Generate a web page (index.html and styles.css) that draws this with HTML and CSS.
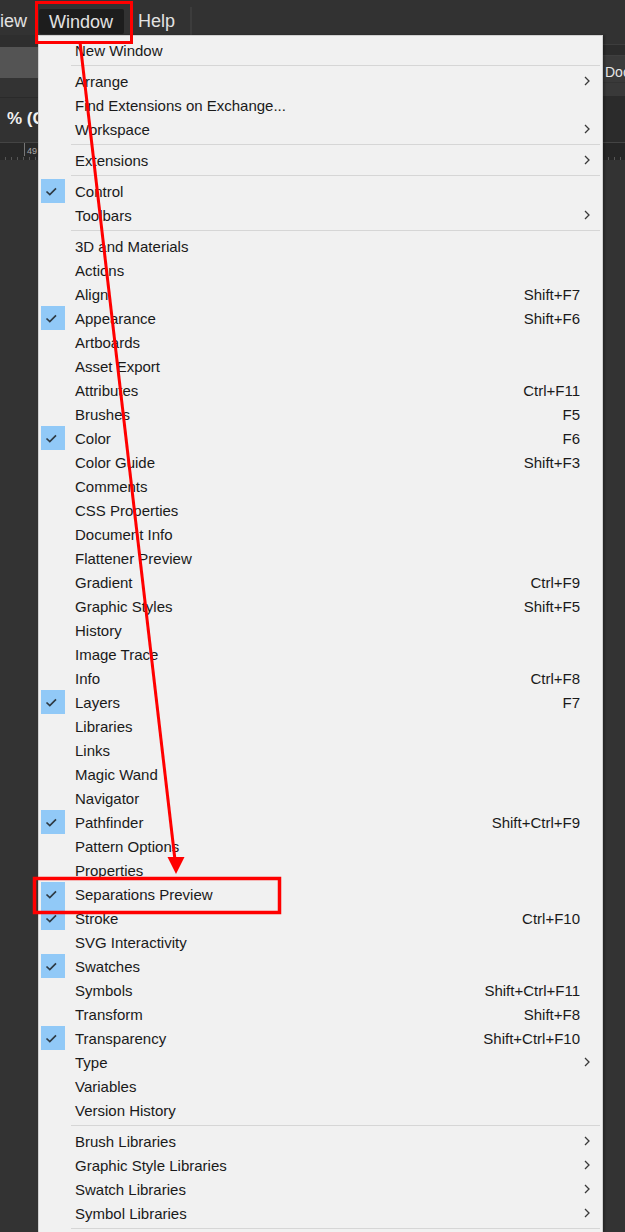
FILE: index.html
```html
<!DOCTYPE html>
<html>
<head>
<meta charset="utf-8">
<link rel="stylesheet" href="styles.css">
</head>
<body>
<div class="page">
  <div class="menubar">
    <span class="mb-item mb-view">iew</span>
    <span class="mb-item mb-active">Window</span>
    <span class="mb-item mb-help">Help</span>
    <span class="mb-sep"></span>
  </div>
  <div class="work">
    <div class="side-left">
      <div class="bl-a"></div>
      <div class="bl-ctrl"></div>
      <div class="bl-b"></div>
      <div class="bl-title"><span class="zoomtxt">% (C</span></div>
      <div class="ruler"><span class="tick"></span><span class="rnum">49</span></div>
      <div class="bl-rest"></div>
    </div>
    <div class="dropdown">
      <div class="item"><span class="chk"></span><span class="lbl">New Window</span><span class="key"></span><span class="sub"></span></div>
      <div class="sep"></div>
      <div class="item"><span class="chk"></span><span class="lbl">Arrange</span><span class="key"></span><span class="sub"><svg width="7" height="10" viewBox="0 0 7 10"><path d="M1 1 L5 5 L1 9" /></svg></span></div>
      <div class="item"><span class="chk"></span><span class="lbl">Find Extensions on Exchange...</span><span class="key"></span><span class="sub"></span></div>
      <div class="item"><span class="chk"></span><span class="lbl">Workspace</span><span class="key"></span><span class="sub"><svg width="7" height="10" viewBox="0 0 7 10"><path d="M1 1 L5 5 L1 9" /></svg></span></div>
      <div class="sep"></div>
      <div class="item"><span class="chk"></span><span class="lbl">Extensions</span><span class="key"></span><span class="sub"><svg width="7" height="10" viewBox="0 0 7 10"><path d="M1 1 L5 5 L1 9" /></svg></span></div>
      <div class="sep"></div>
      <div class="item on"><span class="chk"><svg width="24" height="24" viewBox="0 0 24 24"><path d="M5.5 12.5 L8.8 15.6 L15 9.4" /></svg></span><span class="lbl">Control</span><span class="key"></span><span class="sub"></span></div>
      <div class="item"><span class="chk"></span><span class="lbl">Toolbars</span><span class="key"></span><span class="sub"><svg width="7" height="10" viewBox="0 0 7 10"><path d="M1 1 L5 5 L1 9" /></svg></span></div>
      <div class="sep"></div>
      <div class="item"><span class="chk"></span><span class="lbl">3D and Materials</span><span class="key"></span><span class="sub"></span></div>
      <div class="item"><span class="chk"></span><span class="lbl">Actions</span><span class="key"></span><span class="sub"></span></div>
      <div class="item"><span class="chk"></span><span class="lbl">Align</span><span class="key">Shift+F7</span><span class="sub"></span></div>
      <div class="item on"><span class="chk"><svg width="24" height="24" viewBox="0 0 24 24"><path d="M5.5 12.5 L8.8 15.6 L15 9.4" /></svg></span><span class="lbl">Appearance</span><span class="key">Shift+F6</span><span class="sub"></span></div>
      <div class="item"><span class="chk"></span><span class="lbl">Artboards</span><span class="key"></span><span class="sub"></span></div>
      <div class="item"><span class="chk"></span><span class="lbl">Asset Export</span><span class="key"></span><span class="sub"></span></div>
      <div class="item"><span class="chk"></span><span class="lbl">Attributes</span><span class="key">Ctrl+F11</span><span class="sub"></span></div>
      <div class="item"><span class="chk"></span><span class="lbl">Brushes</span><span class="key">F5</span><span class="sub"></span></div>
      <div class="item on"><span class="chk"><svg width="24" height="24" viewBox="0 0 24 24"><path d="M5.5 12.5 L8.8 15.6 L15 9.4" /></svg></span><span class="lbl">Color</span><span class="key">F6</span><span class="sub"></span></div>
      <div class="item"><span class="chk"></span><span class="lbl">Color Guide</span><span class="key">Shift+F3</span><span class="sub"></span></div>
      <div class="item"><span class="chk"></span><span class="lbl">Comments</span><span class="key"></span><span class="sub"></span></div>
      <div class="item"><span class="chk"></span><span class="lbl">CSS Properties</span><span class="key"></span><span class="sub"></span></div>
      <div class="item"><span class="chk"></span><span class="lbl">Document Info</span><span class="key"></span><span class="sub"></span></div>
      <div class="item"><span class="chk"></span><span class="lbl">Flattener Preview</span><span class="key"></span><span class="sub"></span></div>
      <div class="item"><span class="chk"></span><span class="lbl">Gradient</span><span class="key">Ctrl+F9</span><span class="sub"></span></div>
      <div class="item"><span class="chk"></span><span class="lbl">Graphic Styles</span><span class="key">Shift+F5</span><span class="sub"></span></div>
      <div class="item"><span class="chk"></span><span class="lbl">History</span><span class="key"></span><span class="sub"></span></div>
      <div class="item"><span class="chk"></span><span class="lbl">Image Trace</span><span class="key"></span><span class="sub"></span></div>
      <div class="item"><span class="chk"></span><span class="lbl">Info</span><span class="key">Ctrl+F8</span><span class="sub"></span></div>
      <div class="item on"><span class="chk"><svg width="24" height="24" viewBox="0 0 24 24"><path d="M5.5 12.5 L8.8 15.6 L15 9.4" /></svg></span><span class="lbl">Layers</span><span class="key">F7</span><span class="sub"></span></div>
      <div class="item"><span class="chk"></span><span class="lbl">Libraries</span><span class="key"></span><span class="sub"></span></div>
      <div class="item"><span class="chk"></span><span class="lbl">Links</span><span class="key"></span><span class="sub"></span></div>
      <div class="item"><span class="chk"></span><span class="lbl">Magic Wand</span><span class="key"></span><span class="sub"></span></div>
      <div class="item"><span class="chk"></span><span class="lbl">Navigator</span><span class="key"></span><span class="sub"></span></div>
      <div class="item on"><span class="chk"><svg width="24" height="24" viewBox="0 0 24 24"><path d="M5.5 12.5 L8.8 15.6 L15 9.4" /></svg></span><span class="lbl">Pathfinder</span><span class="key">Shift+Ctrl+F9</span><span class="sub"></span></div>
      <div class="item"><span class="chk"></span><span class="lbl">Pattern Options</span><span class="key"></span><span class="sub"></span></div>
      <div class="item"><span class="chk"></span><span class="lbl">Properties</span><span class="key"></span><span class="sub"></span></div>
      <div class="item on"><span class="chk"><svg width="24" height="24" viewBox="0 0 24 24"><path d="M5.5 12.5 L8.8 15.6 L15 9.4" /></svg></span><span class="lbl">Separations Preview</span><span class="key"></span><span class="sub"></span></div>
      <div class="item on"><span class="chk"><svg width="24" height="24" viewBox="0 0 24 24"><path d="M5.5 12.5 L8.8 15.6 L15 9.4" /></svg></span><span class="lbl">Stroke</span><span class="key">Ctrl+F10</span><span class="sub"></span></div>
      <div class="item"><span class="chk"></span><span class="lbl">SVG Interactivity</span><span class="key"></span><span class="sub"></span></div>
      <div class="item on"><span class="chk"><svg width="24" height="24" viewBox="0 0 24 24"><path d="M5.5 12.5 L8.8 15.6 L15 9.4" /></svg></span><span class="lbl">Swatches</span><span class="key"></span><span class="sub"></span></div>
      <div class="item"><span class="chk"></span><span class="lbl">Symbols</span><span class="key">Shift+Ctrl+F11</span><span class="sub"></span></div>
      <div class="item"><span class="chk"></span><span class="lbl">Transform</span><span class="key">Shift+F8</span><span class="sub"></span></div>
      <div class="item on"><span class="chk"><svg width="24" height="24" viewBox="0 0 24 24"><path d="M5.5 12.5 L8.8 15.6 L15 9.4" /></svg></span><span class="lbl">Transparency</span><span class="key">Shift+Ctrl+F10</span><span class="sub"></span></div>
      <div class="item"><span class="chk"></span><span class="lbl">Type</span><span class="key"></span><span class="sub"><svg width="7" height="10" viewBox="0 0 7 10"><path d="M1 1 L5 5 L1 9" /></svg></span></div>
      <div class="item"><span class="chk"></span><span class="lbl">Variables</span><span class="key"></span><span class="sub"></span></div>
      <div class="item"><span class="chk"></span><span class="lbl">Version History</span><span class="key"></span><span class="sub"></span></div>
      <div class="sep"></div>
      <div class="item"><span class="chk"></span><span class="lbl">Brush Libraries</span><span class="key"></span><span class="sub"><svg width="7" height="10" viewBox="0 0 7 10"><path d="M1 1 L5 5 L1 9" /></svg></span></div>
      <div class="item"><span class="chk"></span><span class="lbl">Graphic Style Libraries</span><span class="key"></span><span class="sub"><svg width="7" height="10" viewBox="0 0 7 10"><path d="M1 1 L5 5 L1 9" /></svg></span></div>
      <div class="item"><span class="chk"></span><span class="lbl">Swatch Libraries</span><span class="key"></span><span class="sub"><svg width="7" height="10" viewBox="0 0 7 10"><path d="M1 1 L5 5 L1 9" /></svg></span></div>
      <div class="item"><span class="chk"></span><span class="lbl">Symbol Libraries</span><span class="key"></span><span class="sub"><svg width="7" height="10" viewBox="0 0 7 10"><path d="M1 1 L5 5 L1 9" /></svg></span></div>
      <div class="sep"></div>
      <div class="item"><span class="chk"></span><span class="lbl"></span><span class="key"></span><span class="sub"></span></div>
    </div>
    <div class="side-right">
      <div class="br-a"></div>
      <div class="br-b"></div>
      <div class="br-doc"><span class="doctxt">Doc</span></div>
      <div class="br-c"></div>
      <div class="br-d"></div>
      <div class="ruler ruler-r"></div>
      <div class="bl-rest"></div>
    </div>
  </div>
  <svg class="annot" width="625" height="1232" viewBox="0 0 625 1232">
    <rect x="36.5" y="2.5" width="95" height="40" fill="none" stroke="#ff0000" stroke-width="3"/>
    <rect x="34.5" y="878.5" width="245" height="34" fill="none" stroke="#ff0000" stroke-width="3.5"/>
    <line x1="80" y1="42" x2="175" y2="860" stroke="#ff0000" stroke-width="3"/>
    <polygon points="167.5,857 184.5,857 176,874" fill="#ff0000"/>
  </svg>
</div>
</body>
</html>
```

FILE: styles.css
```css
* { box-sizing: border-box; }
html, body { margin: 0; padding: 0; }
body {
  width: 625px;
  height: 1232px;
  overflow: hidden;
  background: #323232;
  font-family: "Liberation Sans", Arial, sans-serif;
}
.page {
  position: relative;
  width: 625px;
  height: 1232px;
  overflow: hidden;
}
.menubar {
  height: 35px;
  background: #323232;
  display: flex;
  align-items: stretch;
  position: relative;
}
.mb-item {
  color: #e2e2e2;
  font-size: 18px;
  display: flex;
  align-items: center;
  padding-top: 8px;
}
.mb-view { margin-left: 0; width: 39px; }
.mb-active {
  background: #1d1d1d;
  margin-top: 9px;
  margin-left: 0;
  height: 25px;
  padding: 0 9px 0 10px;
  border-radius: 2px;
  width: 85px;
  padding-top: 1px;
}
.mb-help { margin-left: 14px; width: 52px; }
.mb-sep {
  width: 2px;
  background: #3c3c3c;
  margin-top: 7px;
}
.work {
  display: flex;
  height: 1197px;
}
.side-left {
  width: 38px;
  flex: none;
  overflow: hidden;
  display: flex;
  flex-direction: column;
}
.bl-a { height: 12px; background: #2e2e2e; }
.bl-ctrl { height: 31px; background: #545454; }
.bl-b { height: 20px; background: #333333; border-bottom: 1px solid #2a2a2a; }
.bl-title {
  height: 44px;
  background: #323232;
  display: flex;
  align-items: center;
  white-space: nowrap;
}
.zoomtxt {
  color: #f0f0f0;
  font-size: 17px;
  font-weight: bold;
  padding-left: 7px;
  padding-bottom: 2px;
}
.ruler {
  height: 18px;
  background: #282828;
  border-top: 1px solid #444;
  position: relative;
  display: flex;
  align-items: flex-start;
  background-image: repeating-linear-gradient(90deg, transparent 0 5px, #555 5px 6px);
  background-size: 100% 3px;
  background-repeat: no-repeat;
  background-position: 0 100%;
}
.tick {
  width: 1px;
  height: 13px;
  background: #777;
  margin-left: 24px;
}
.rnum {
  color: #aaaaaa;
  font-size: 9px;
  margin-left: 2px;
  margin-top: 3px;
  background: #282828;
}
.bl-rest { flex: 1; background: #333333; }

.dropdown {
  width: 565px;
  flex: none;
  background: #f1f1f1;
  border: 1px solid #d0d0d0;
  border-bottom: none;
  padding-top: 2px;
  color: #1a1a1a;
  font-size: 15px;
  box-shadow: 2px 0 2px rgba(0,0,0,0.25);
  position: relative;
  z-index: 1;
}
.item {
  height: 24px;
  display: flex;
  align-items: center;
  white-space: nowrap;
}
.chk {
  width: 24px;
  height: 24px;
  margin-left: 2px;
  flex: none;
}
.item.on .chk { background: #91c9f7; }
.chk svg { display: block; }
.chk path { fill: none; stroke: #2e3a44; stroke-width: 1.7; }
.lbl {
  flex: 1;
  margin-left: 10px;
  line-height: 24px;
  padding-top: 1px;
}
.key {
  line-height: 24px;
  padding-top: 1px;
  margin-right: 1px;
}
.sub {
  width: 21px;
  flex: none;
  display: flex;
  align-items: center;
  padding-left: 3px;
}
.sub svg { display: block; }
.sub path { fill: none; stroke: #3a3a3a; stroke-width: 1.3; }
.sep {
  height: 1px;
  background: #d6d6d6;
  margin: 3px 2px 3px 32px;
}

.side-right {
  width: 22px;
  flex: none;
  overflow: hidden;
  display: flex;
  flex-direction: column;
  background: #323232;
}
.br-a { height: 10px; background: #323232; border-bottom: 1px solid #3d3d3d; }
.br-b { height: 11px; background: #2c2c2c; border-bottom: 1px solid #3f3f3f; }
.br-doc {
  height: 26px;
  background: #3a3a3a;
  display: flex;
  align-items: center;
  white-space: nowrap;
  padding-top: 6px;
}
.doctxt { color: #e6e6e6; font-size: 14px; padding-left: 2px; }
.br-c { height: 14px; background: #393939; border-top: 1px solid #333; }
.br-d { height: 46px; background: #2b2b2b; }
.ruler-r { background-color: #262626; }

.annot {
  position: absolute;
  left: 0;
  top: 0;
  pointer-events: none;
  z-index: 5;
}
```
